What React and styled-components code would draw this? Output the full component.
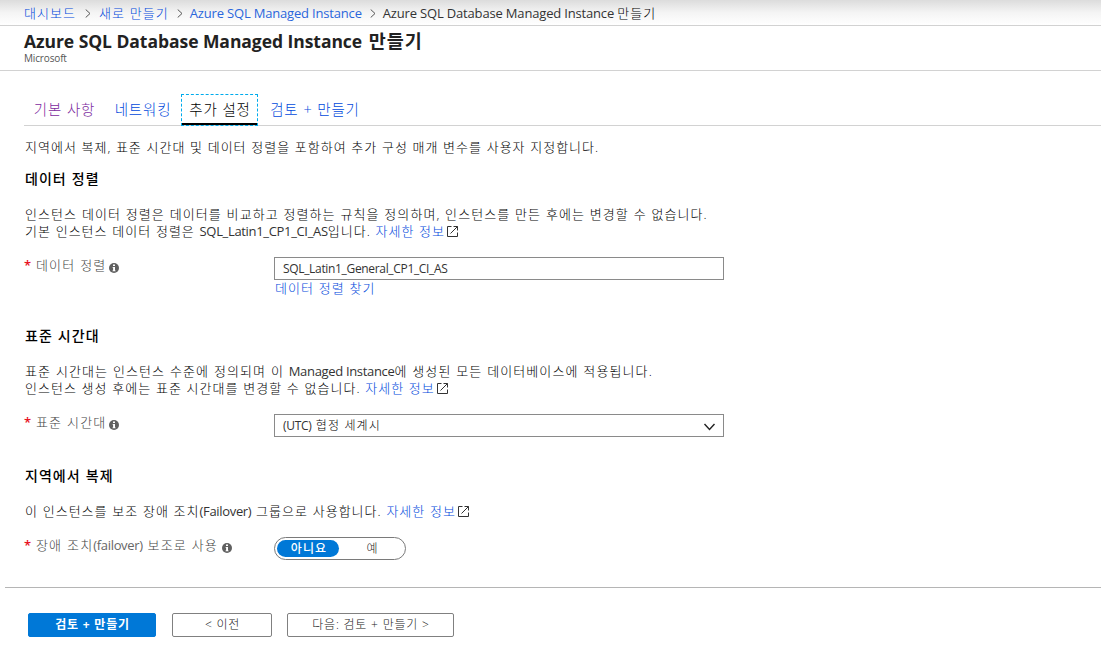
import React from "react";
import styled, { createGlobalStyle } from "styled-components";

const Global = createGlobalStyle`
  * { box-sizing: border-box; }
  body {
    margin: 0;
    background: #fff;
    color: #000;
    font: 300 13px/17px "Open Sans", "Noto Sans CJK KR", sans-serif;
    overflow: hidden;
  }
`;

const Page = styled.div`
  width: 1101px;
  height: 655px;
  display: flex;
  flex-direction: column;
  white-space: nowrap;
  letter-spacing: 1.05px;
  word-spacing: 0.3px;
`;
const En = styled.span`
  font-weight: ${(p) => p.$weight ?? 400};
  font-size: ${(p) => (p.$size ? p.$size + "px" : "inherit")};
  letter-spacing: ${(p) => p.$ls ?? -0.33}px;
  word-spacing: 0;
  color: ${(p) => p.$color ?? "#333"};
`;
const Link = styled.a`
  color: #0049dc;
`;

const Breadcrumb = styled.nav`
  height: 26px;
  padding: 1px 0 0 24px;
  display: flex;
  align-items: center;
  border-bottom: 1px solid #d2d2d2;
  background: linear-gradient(#dcdcdc, #f4f4f4 50%, #fff);
`;
const Sep = styled.svg`
  width: 6px;
  height: 9px;
  margin: 0 ${(p) => p.$right ?? 8}px 0 ${(p) => p.$left ?? 8}px;
  flex: none;
  fill: none;
  stroke: #555;
`;

const Header = styled.header`
  height: 45px;
  padding: 3px 0 0 24px;
  border-bottom: 1px solid #d2d2d2;
`;
const Title = styled.h1`
  margin: 0;
  font-size: 18.5px;
  line-height: 24px;
  font-weight: 600;
  letter-spacing: 0.9px;
  word-spacing: 1px;
  color: #222;
`;
const Publisher = styled.div`
  font-size: 10px;
  line-height: 11px;
  font-weight: 400;
  letter-spacing: -0.15px;
  color: #555;
`;

const Tabs = styled.div`
  margin: 23px 0 0 24px;
  height: 32px;
  display: flex;
  border-bottom: 1px solid #d2d2d2;
  font-size: 14.5px;
  letter-spacing: 0.8px;
`;
const Tab = styled.div`
  width: ${(p) => p.$w}px;
  height: 32px;
  flex: none;
  display: flex;
  justify-content: center;
  padding: 7px 0 0 1px;
  color: ${(p) => p.$color || "#0049dc"};
`;
const ActiveTab = styled(Tab)`
  padding-top: 6px;
  color: #000;
  border: 1px dashed #00abec;
  box-shadow: inset 0 -2px 0 #000;
`;

const Content = styled.main`
  padding-left: 25px;
`;
const Intro = styled.p`
  margin: 13px 0 0;
  letter-spacing: 1px;
`;
const Section = styled.section`
  padding-top: ${(p) => p.$top}px;
`;
const Heading = styled.h2`
  margin: 0 0 19px;
  font-size: 14px;
  line-height: 17px;
  font-weight: 500;
  color: #000;
`;
const Text = styled.p`
  margin: 0;
  letter-spacing: ${(p) => p.$ls ?? 1.02}px;
`;
const Field = styled.div`
  display: flex;
  margin-top: ${(p) => p.$top ?? 17}px;
  height: 23px;
`;
const Label = styled.label`
  width: 249px;
  display: flex;
  align-items: flex-start;
  letter-spacing: 1.15px;
  color: #444;
`;
const Star = styled.span`
  color: #e81123;
  width: 12px;
  margin-left: -1px;
  font-weight: 600;
  letter-spacing: 0;
`;
const Box = styled.div`
  width: 450px;
  height: 23px;
  padding: 0 8px;
  border: 1px solid #8a8a8a;
  display: flex;
  align-items: center;
  justify-content: space-between;
  font-size: 12px;
`;
const FindLink = styled.div`
  margin: 0 0 0 250px;
`;
const Toggle = styled.div`
  width: 132px;
  height: 23px;
  padding: 2px;
  border: 1px solid #7a7a7a;
  border-radius: 12px;
  display: flex;
  font-size: 12px;
`;
const Option = styled.div`
  width: ${(p) => (p.$on ? 62 : 66)}px;
  height: 17px;
  flex: none;
  line-height: 17px;
  padding-left: ${(p) => (p.$on ? 2 : 1)}px;
  border-radius: 9px;
  text-align: center;
  background: ${(p) => (p.$on ? "#0078d7" : "transparent")};
  color: ${(p) => (p.$on ? "#fff" : "#222")};
  font-weight: ${(p) => (p.$on ? 500 : 300)};
`;
const Footer = styled.footer`
  margin: 27px 0 0 5px;
  padding: 25px 0 0 23px;
  border-top: 1px solid #b5b5b5;
  display: flex;
`;
const Button = styled.button`
  width: ${(p) => p.$w}px;
  height: 24px;
  margin: 0 ${(p) => p.$gap ?? 0}px 0 0;
  padding: 0 0 2px 1px;
  font: inherit;
  font-size: 12px;
  font-weight: ${(p) => (p.$primary ? 700 : 300)};
  letter-spacing: 0.8px;
  color: ${(p) => (p.$primary ? "#fff" : "#222")};
  background: ${(p) => (p.$primary ? "#0078d7" : "#fff")};
  border: 1px solid ${(p) => (p.$primary ? "#0078d7" : "#808080")};
  border-radius: 2px;
`;
const InfoSvg = styled.svg`
  width: 10px;
  height: 10px;
  margin: 6px 0 0 ${(p) => p.$gap ?? 3}px;
  flex: none;
`;
const ExternalSvg = styled.svg`
  width: 11px;
  height: 11px;
  margin-left: 2px;
  vertical-align: -1px;
  fill: none;
  stroke: #333;
`;
const Chevron = styled.svg`
  width: 13px;
  height: 8px;
  margin-top: 2px;
  margin-right: -1px;
  fill: none;
  stroke: #222;
  stroke-width: 1.4;
`;

const Info = ({ gap }) => (
  <InfoSvg viewBox="0 0 10 10" $gap={gap}>
    <circle cx="5" cy="5" r="5" fill="#606060" />
    <path d="M4 1.5h2v1.6H4zM3.6 4H6v3.5h.6v.8H3.5v-.8h.6V4.8h-.5z" fill="#fff" />
  </InfoSvg>
);
const External = () => (
  <ExternalSvg viewBox="0 0 11 11">
    <path d="M4.500 .5H.5v10h10V6.500M6.500 .5h4v4M10.500 .5L3.500 7.500" />
  </ExternalSvg>
);
const Arrow = (props) => (
  <Sep viewBox="0 0 6 9" {...props}>
    <path d="M.7 .5L5 4.500L.7 8.500" />
  </Sep>
);

export default function App() {
  return (
    <Page>
      <Global />
      <Breadcrumb>
        <Link>대시보드</Link>
        <Arrow $left={9} />
        <Link>새로 만들기</Link>
        <Arrow $right={7} />
        <Link><En $ls={-0.18} $color="#2a66dc">Azure SQL Managed Instance</En></Link>
        <Arrow $right={7} />
        <span>
          <En $ls={-0.17}>Azure SQL Database Managed Instance </En>만들기
        </span>
      </Breadcrumb>
      <Header>
        <Title><En $weight={700} $size={17.5} $ls={-0.05} $color="#222">Azure SQL Database Managed Instance</En> 만들기</Title>
        <Publisher>Microsoft</Publisher>
      </Header>
      <Tabs>
        <Tab $w={80} $color="#7d2a9e">기본 사항</Tab>
        <Tab $w={77}>네트워킹</Tab>
        <ActiveTab $w={77}>추가 설정</ActiveTab>
        <Tab $w={113}>검토 + 만들기</Tab>
      </Tabs>
      <Content>
        <Intro>지역에서 복제, 표준 시간대 및 데이터 정렬을 포함하여 추가 구성 매개 변수를 사용자 지정합니다.</Intro>
        <Section $top={14}>
          <Heading>데이터 정렬</Heading>
          <Text $ls={1.08}>인스턴스 데이터 정렬은 데이터를 비교하고 정렬하는 규칙을 정의하며, 인스턴스를 만든 후에는 변경할 수 없습니다.</Text>
          <Text>
            기본 인스턴스 데이터 정렬은 <En>SQL_Latin1_CP1_CI_AS</En>입니다. <Link>자세한 정보</Link>
            <External />
          </Text>
          <Field>
            <Label><Star>*</Star>데이터 정렬<Info /></Label>
            <Box><En>SQL_Latin1_General_CP1_CI_AS</En></Box>
          </Field>
          <FindLink><Link>데이터 정렬 찾기</Link></FindLink>
        </Section>
        <Section $top={30}>
          <Heading>표준 시간대</Heading>
          <Text $ls={1.1}>
            표준 시간대는 인스턴스 수준에 정의되며 이 <En>Managed Instance</En>에 생성된 모든 데이터베이스에 적용됩니다.
          </Text>
          <Text>
            인스턴스 생성 후에는 표준 시간대를 변경할 수 없습니다. <Link>자세한 정보</Link>
            <External />
          </Text>
          <Field>
            <Label><Star>*</Star>표준 시간대<Info /></Label>
            <Box>
              <span><En>(UTC)</En> 협정 세계시</span>
              <Chevron viewBox="0 0 13 8"><path d="M1.500 1L6.500 6.500L11.500 1" /></Chevron>
            </Box>
          </Field>
        </Section>
        <Section $top={30}>
          <Heading>지역에서 복제</Heading>
          <Text>
            이 인스턴스를 보조 장애 조치<En>(Failover)</En> 그룹으로 사용합니다. <Link>자세한 정보</Link>
            <External />
          </Text>
          <Field>
            <Label>
              <Star>*</Star>
              <span>장애 조치<En $color="#666">(failover)</En> 보조로 사용</span>
              <Info gap={4} />
            </Label>
            <Toggle>
              <Option $on>아니요</Option>
              <Option>예</Option>
            </Toggle>
          </Field>
        </Section>
      </Content>
      <Footer>
        <Button $primary $w={128} $gap={16}>검토 + 만들기</Button>
        <Button $w={100} $gap={15}>&lt; 이전</Button>
        <Button $w={167}>다음: 검토 + 만들기 &gt;</Button>
      </Footer>
    </Page>
  );
}
